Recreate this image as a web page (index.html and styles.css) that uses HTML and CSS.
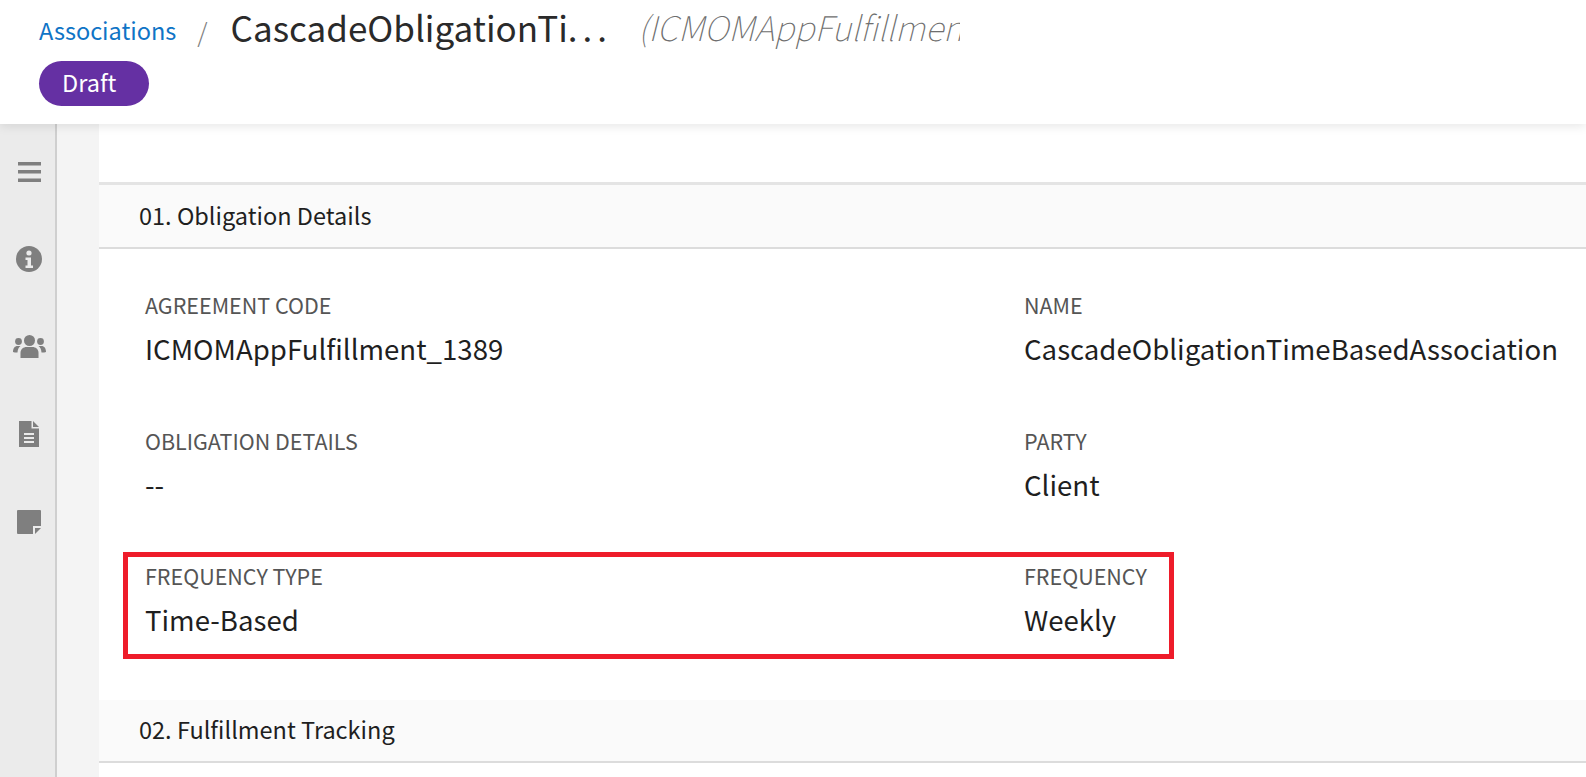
FILE: index.html
```html
<!DOCTYPE html>
<html lang="en">
<head>
<meta charset="utf-8">
<title>Associations</title>
<link rel="stylesheet" href="styles.css">
</head>
<body>
<header class="topbar">
  <div class="crumbs">
    <a class="crumb-link" href="#">Associations</a>
    <span class="crumb-sep">/</span>
    <h1 class="title">CascadeObligationTi<span class="title-more">...</span></h1>
    <span class="subtitle">(ICMOMAppFulfillment_1389)</span>
  </div>
  <span class="badge">Draft</span>
</header>
<div class="shell">
  <nav class="rail">
    <span class="rail-slot"><svg viewBox="0 0 23 20" width="23" height="20"><path d="M0 0h23v3.500H0zM0 8h23v3.500H0zM0 16.500h23V20H0z" fill="#7f7f7f"/></svg></span>
    <span class="rail-slot"><svg viewBox="0 0 26 26" width="26" height="26"><circle cx="13" cy="13" r="13" fill="#7f7f7f"/><circle cx="13" cy="7" r="2.600" fill="#ebebeb"/><path d="M9.500 11.500h5.500v8h2v2.500H9.500v-2.500h2v-5.500h-2z" fill="#ebebeb"/></svg></span>
    <span class="rail-slot"><svg viewBox="0 0 33 23" width="33" height="23"><circle cx="16.500" cy="5.500" r="5.500" fill="#7f7f7f"/><circle cx="5.500" cy="6.500" r="3.400" fill="#7f7f7f"/><circle cx="27.500" cy="6.500" r="3.400" fill="#7f7f7f"/><path d="M7.500 23v-5c0-4 3-6 6-6h6c3 0 6 2 6 6v5z" fill="#7f7f7f"/><path d="M0 17c0-4 2-6 4.500-6h3c-2 1.500-2.800 3.500-3 6.500-2 0-3.500 0-4.500-.5zM33 17c0-4-2-6-4.500-6h-3c2 1.500 2.800 3.500 3 6.500 2 0 3.500 0 4.500-.5z" fill="#7f7f7f"/></svg></span>
    <span class="rail-slot"><svg viewBox="0 0 20 26" width="20" height="26"><path d="M0 0h12.500v7.500H20V26H0zM14 0l6 6h-6z" fill="#7f7f7f"/><path d="M5 12h10v2H5zM5 16h10v2H5zM5 20h10v2H5z" fill="#ebebeb"/></svg></span>
    <span class="rail-slot"><svg viewBox="0 0 24 24" width="24" height="24"><path d="M1 0h22a1 1 0 0 1 1 1v15h-8v8H1a1 1 0 0 1-1-1V1a1 1 0 0 1 1-1z" fill="#7f7f7f"/><path d="M18 18h6l-6 6z" fill="#7f7f7f"/></svg></span>
  </nav>
  <div class="gutter"></div>
  <main class="content">
    <section class="section">
      <h2 class="section-head section-head--first">01. Obligation Details</h2>
      <div class="fields">
        <div class="field"><div class="label">AGREEMENT CODE</div><div class="value">ICMOMAppFulfillment_1389</div></div>
        <div class="field"><div class="label">NAME</div><div class="value">CascadeObligationTimeBasedAssociation</div></div>
        <div class="field"><div class="label">OBLIGATION DETAILS</div><div class="value">--</div></div>
        <div class="field"><div class="label">PARTY</div><div class="value">Client</div></div>
        <div class="field"><div class="label">FREQUENCY TYPE</div><div class="value">Time-Based</div></div>
        <div class="field"><div class="label">FREQUENCY</div><div class="value">Weekly</div></div>
      </div>
      <div class="highlight"></div>
    </section>
    <section class="section">
      <h2 class="section-head">02. Fulfillment Tracking</h2>
    </section>
  </main>
</div>
</body>
</html>
```
FILE: styles.css
```css
* { box-sizing: border-box; }
html, body { margin: 0; height: 100%; overflow: hidden; background: #fff; }
body { font-family: "Noto Sans CJK SC", "Noto Sans", sans-serif; color: #1f1f1f; }

.topbar {
  position: relative;
  z-index: 2;
  height: 124px;
  padding: 8px 0 0 39px;
  background: #fff;
  box-shadow: 0 2px 10px rgba(0, 0, 0, .1);
}
.crumbs { display: flex; align-items: center; height: 44px; }
.crumb-link { font-size: 23.5px; line-height: 30px; color: #0f74c6; text-decoration: none; }
.crumb-sep { font-size: 26px; line-height: 30px; color: #808080; font-weight: 300; margin: 2px 0 0 21px; }
.title {
  margin: 0 0 6px 23px;
  flex: none;
  font-size: 35px;
  line-height: 44px;
  font-weight: 400;
  color: #2a2a2a;
  white-space: nowrap;
}
.title-more { letter-spacing: 5px; }
.subtitle {
  margin: 0 0 6px 26px;
  width: 322px;
  font-size: 34px;
  line-height: 44px;
  font-style: italic;
  font-weight: 100;
  color: #6e6e6e;
  white-space: nowrap;
  overflow: hidden;
}
.badge {
  display: inline-flex;
  align-items: center;
  width: 110px;
  height: 45px;
  margin-top: 9px;
  padding: 0 0 3px 23px;
  border-radius: 23px;
  background: #6530a3;
  color: #fff;
  font-size: 23.5px;
  line-height: 30px;
}

.shell { display: flex; height: 653px; }
.rail {
  flex: none;
  width: 57px;
  padding: 4px 0 0 3px;
  display: flex;
  flex-direction: column;
  background: #ebebeb;
  border-right: 2px solid #cfcfcf;
}
.rail-slot { flex: none; height: 87.5px; display: flex; align-items: center; justify-content: center; }
.gutter { flex: none; width: 42px; background: #f4f4f4; }
.content { flex: 1; min-width: 0; padding-top: 58px; background: #fff; }

.section { position: relative; }
.section-head {
  margin: 0;
  padding: 0 0 3px 40px;
  height: 63px;
  display: flex;
  align-items: center;
  background: #fafafa;
  border-bottom: 2px solid #dcdcdc;
  font-size: 23.5px;
  line-height: 30px;
  font-weight: 400;
  color: #1f1f1f;
}
.section-head--first { height: 67px; border-top: 3px solid #e4e4e4; }

.fields {
  display: grid;
  grid-template-columns: 879px 1fr;
  grid-auto-rows: 135.5px;
  padding: 42px 0 0 46px;
  height: 451px;
}
.label { font-size: 21.5px; line-height: 28px; color: #555; }
.value { margin-top: 10px; font-size: 27.6px; line-height: 38px; color: #1f1f1f; }

.highlight {
  position: absolute;
  left: 24px;
  top: 370px;
  width: 1051px;
  height: 107px;
  border: 5px solid #ee1c2a;
  pointer-events: none;
}
```
